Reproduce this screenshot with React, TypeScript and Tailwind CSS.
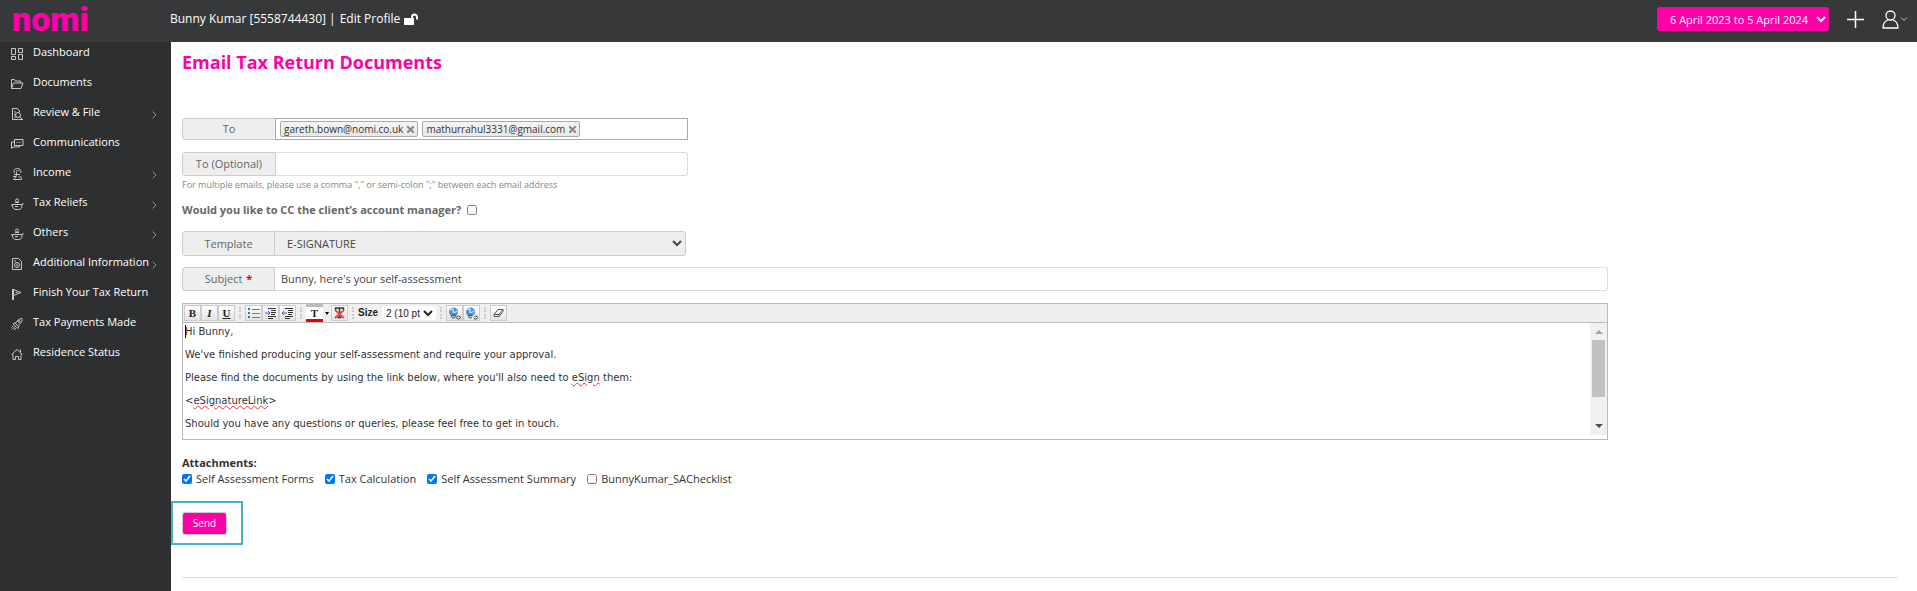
import { ReactNode, useState } from "react";

type NavItem = {
  title: string;
  icon: ReactNode;
  hasChildren?: boolean;
};

const potIcon = (
  <>
    <path d="M1.5 6.5h9.5v1.500c0 2-1.500 3.500-3.500 3.500h-2.500c-2 0-3.500-1.500-3.500-3.500z" />
    <path d="M1.500 7.500L0 6.500M11 7l1.500-2M4 8.500h3" />
    <circle cx="6" cy="2.500" r="1.500" />
    <path d="M4 4.500h4" />
  </>
);

const navItems: NavItem[] = [
  {
    title: "Dashboard",
    icon: <path d="M.5.5h4v6h-4zM.5 8.500h4v3h-4zM7.500.5h4v4h-4zM7.500 6.500h4v5h-4z" />,
  },
  {
    title: "Documents",
    icon: <path d="M.5 10.500v-9h3l1 1.500h5v2M.5 10.500l2-5.500h9.500l-2 5.500z" />,
  },
  {
    title: "Review & File",
    hasChildren: true,
    icon: (
      <>
        <path d="M8.500 4V3l-2-2.500h-5v11h6M3 4h2M3 6.500h1M3 9h2" />
        <circle cx="7" cy="7" r="2.500" />
        <path d="M9 9l3 3M7.500 11.500h4" />
      </>
    ),
  },
  {
    title: "Communications",
    icon: (
      <>
        <path d="M3.500 1.500h8.500v6H6l-2.500 0z" />
        <path d="M3.500 4h-3v6.500l1.500-1.500h6.500v-1.500M5.500 4.500h1M7.500 4.500h1M9.500 4.500h.5" />
      </>
    ),
  },
  {
    title: "Income",
    hasChildren: true,
    icon: (
      <>
        <path d="M3.500 5C2 2 4 .5 6.500.5s4.500 2 3 4.500" />
        <path d="M8.500 3c-2-1.500-3.500-.5-3 1.500v2M3 6.500h6M2 8.500h3M5.500 6.500c0 2-1 3.500-3 5h8v-1.500M7.500 9h3" />
      </>
    ),
  },
  { title: "Tax Reliefs", hasChildren: true, icon: potIcon },
  { title: "Others", hasChildren: true, icon: potIcon },
  {
    title: "Additional Information",
    hasChildren: true,
    icon: (
      <>
        <path d="M1.500.5h6l3 3v8h-9z" />
        <circle cx="6" cy="7" r="2.500" />
        <path d="M6 5.500v3M3 3h2" />
      </>
    ),
  },
  {
    title: "Finish Your Tax Return",
    icon: <path d="M2.500 12V1M1.500 1v11M2.500 1.500l7.500 3-7.500 3M4.500 4.500h2" />,
  },
  {
    title: "Tax Payments Made",
    icon: (
      <>
        <path d="M11 .5c-3 0-5 2-6.500 5l2 2c3-1.500 5-3.500 4.500-7z" />
        <path d="M4.500 4.500l-2.500 1.500 5 4.500 1-3M1 11.500l3-3M3 12l2-2M.5 9.500l1.500-1.500" />
        <circle cx="8" cy="3.500" r="1" />
      </>
    ),
  },
  {
    title: "Residence Status",
    icon: <path d="M.5 6.500l5.500-5 5.500 5M2 6v5.500h2.500v-3h3v3h2.500v-5.500M9.500 4v-2.500" />,
  },
];

const recipients = ["gareth.bown@nomi.co.uk", "mathurrahul3331@gmail.com"];

const attachments = [
  { title: "Self Assessment Forms", checked: true },
  { title: "Tax Calculation", checked: true },
  { title: "Self Assessment Summary", checked: true },
  { title: "BunnyKumar_SAChecklist", checked: false },
];

const labelStyle =
  "flex shrink-0 items-center justify-center rounded-l-[3px] border border-[#ccc] bg-[#eee] text-[#666]";

const Header = () => (
  <header className="flex h-[42px] items-center bg-[#37383a] text-[12px] text-white">
    <a
      href="#"
      className="w-[170px] pb-[5px] pl-3 font-['Roboto',sans-serif] text-[34px] leading-[30px] font-black text-[#ff00a8]"
    >
      nomi
    </a>
    <div className="flex items-center gap-1 pb-1">
      <span>Bunny Kumar [5558744430] |</span>
      <a href="#">Edit Profile</a>
      <svg width="15" height="12" viewBox="0 0 15 12" aria-hidden="true">
        <path d="M0 5h10v7H0z" fill="#fff" />
        <path d="M8 6V4a2.500 2.500 0 0 1 5 0v2.500" fill="none" stroke="#fff" strokeWidth="2" />
      </svg>
    </div>
    <div className="ml-auto flex items-center pr-[9px] pb-1">
      <select
        aria-label="Tax year"
        className="h-6 w-[172px] rounded-[3px] bg-[#ff00a8] pl-[9px] text-[11px]"
      >
        <option>6 April 2023 to 5 April 2024</option>
      </select>
      <button aria-label="Add" className="ml-[18px]">
        <svg width="17" height="17" viewBox="0 0 17 17" stroke="#fff" strokeWidth="1.500">
          <path d="M8.500 0v17M0 8.500h17" />
        </svg>
      </button>
      <button aria-label="Account" className="ml-[18px] flex items-center gap-px">
        <svg width="17" height="19" viewBox="0 0 17 19" fill="none" stroke="#fff" strokeWidth="1.300">
          <circle cx="8.500" cy="5.500" r="4.500" />
          <path d="M1 18c0-4 2-7 5-8M16 18c0-4-2-7-5-8M.5 18h16" />
        </svg>
        <svg width="8" height="5" viewBox="0 0 8 5" fill="none" stroke="#bbb">
          <path d="M1 .5l3 3 3-3" />
        </svg>
      </button>
    </div>
  </header>
);

const Sidebar = () => (
  <nav className="flex w-[171px] shrink-0 flex-col gap-[10px] bg-[#2e2f31] text-white">
    {navItems.map((item) => (
      <a key={item.title} href="#" className="flex h-5 items-center pr-[14px] pl-[11px] whitespace-nowrap">
        <svg
          width="13"
          height="13"
          viewBox="0 0 13 13"
          fill="none"
          stroke="#c8c8c8"
          className="mt-1 mr-[9px] shrink-0"
        >
          {item.icon}
        </svg>
        {item.title}
        {item.hasChildren && (
          <svg width="5" height="8" viewBox="0 0 5 8" fill="none" stroke="#888" className="mt-[5px] ml-auto shrink-0">
            <path d="M.5.5l3.500 3.500-3.500 3.500" />
          </svg>
        )}
      </a>
    ))}
  </nav>
);

const ToolButton = ({ label, children }: { label: string; children: ReactNode }) => (
  <button
    aria-label={label}
    className="flex h-4 w-[17px] items-center justify-center border border-[#ccc] bg-linear-to-b from-white to-[#e4e4e4] font-['Liberation_Serif',serif] text-[11px] leading-none font-bold text-[#222]"
  >
    {children}
  </button>
);

const Separator = () => <span className="mx-1 h-3 border-l-2 border-dotted border-[#ccc]" />;

const IndentIcon = ({ outdent }: { outdent?: boolean }) => (
  <svg width="12" height="11" viewBox="0 0 12 11" fill="none" stroke="#333">
    <path d="M3 .5h8M6 2.500h5M6 4.500h5M6 6.500h4M3 8.500h8M3 10.500h5" />
    <path d={outdent ? "M5 5H0M2 3L0 5l2 2" : "M0 5h5M3 3l2 2-2 2"} stroke="#3563e0" />
  </svg>
);

const GlobeIcon = ({ broken }: { broken?: boolean }) => (
  <svg width="13" height="13" viewBox="0 0 13 13" fill="none">
    <circle cx="5.500" cy="5" r="4.500" fill="#4d8fd6" />
    <path d="M2 3c2-2 4-1 3 1s2 2 4 0" stroke="#b9dcfa" strokeWidth="1.500" />
    <ellipse cx="5.500" cy="9.500" rx="2" ry="1.500" stroke="#444" />
    <ellipse cx="10.500" cy="10.500" rx="2" ry="1.500" stroke="#444" />
    {broken && <path d="M7 12l2-4" stroke="#fff" strokeWidth="1.500" />}
  </svg>
);

const Toolbar = () => (
  <div className="flex h-[19px] items-center border-b border-[#bbb] bg-[#efefef] px-px">
    <ToolButton label="Bold">B</ToolButton>
    <ToolButton label="Italic">
      <i>I</i>
    </ToolButton>
    <ToolButton label="Underline">
      <u>U</u>
    </ToolButton>
    <Separator />
    <ToolButton label="Bullet list">
      <svg width="12" height="11" viewBox="0 0 12 11">
        <path d="M0 0h2v2H0zM0 4h2v2H0zM0 8h2v2H0z" fill="#3563e0" />
        <path d="M4 1.500h8M4 5.500h8M4 9.500h8" stroke="#4a76e8" />
      </svg>
    </ToolButton>
    <ToolButton label="Indent">
      <IndentIcon />
    </ToolButton>
    <ToolButton label="Outdent">
      <IndentIcon outdent />
    </ToolButton>
    <Separator />
    <button
      aria-label="Text colour"
      className="h-[18px] w-[17px] border-t-3 border-b-3 border-t-[#bbb] border-b-red-600 bg-white font-['Liberation_Serif',serif] text-[11px] leading-3 font-bold text-[#222]"
    >
      T
    </button>
    <span className="mx-[2px] border-x-2 border-t-3 border-x-transparent border-t-black" />
    <ToolButton label="Clear formatting">
      <svg width="11" height="12" viewBox="0 0 11 12" fill="none">
        <path d="M1.500 3V1h8v2M5.500 1v9M3.500 10.500h4" stroke="#333" strokeWidth="1.500" />
        <path d="M1 3l9 8M10 3l-9 8" stroke="#e8474f" strokeWidth="2" />
      </svg>
    </ToolButton>
    <Separator />
    <label className="flex items-center gap-1 font-['Liberation_Sans',sans-serif] text-[10px] font-bold text-[#222]">
      Size
      <select className="h-[14px] w-[54px] rounded-[3px] bg-white text-[10px] leading-[13px] font-normal">
        <option>2 (10 pt)</option>
      </select>
    </label>
    <Separator />
    <ToolButton label="Insert link">
      <GlobeIcon />
    </ToolButton>
    <ToolButton label="Remove link">
      <GlobeIcon broken />
    </ToolButton>
    <Separator />
    <ToolButton label="Eraser">
      <svg width="11" height="9" viewBox="0 0 11 9" fill="#fff" stroke="#555">
        <path d="M1 5.500L5 .5h5l-4 5zM1 5.500v2h5v-2M6 7.500l4-5v-2" />
      </svg>
    </ToolButton>
  </div>
);

const Editor = () => (
  <div className="border border-[#bbb]">
    <Toolbar />
    <div className="flex justify-between pb-1">
      <div
        role="textbox"
        aria-label="Message"
        className="flex flex-col gap-[10px] px-[2px] pt-[2px] pb-[5px] font-['DejaVu_Sans',sans-serif] text-[10px] leading-[13px] text-[#333]"
      >
        <p className="flex">
          <span className="-mr-px border-l border-black" />
          Hi Bunny,
        </p>
        <p>We've finished producing your self-assessment and require your approval.</p>
        <p>
          Please find the documents by using the link below, where you'll also need to{" "}
          <span className="underline decoration-red-500 decoration-wavy decoration-1">eSign</span> them:
        </p>
        <p>
          &lt;
          <span className="underline decoration-red-500 decoration-wavy decoration-1">eSignatureLink</span>
          &gt;
        </p>
        <p>Should you have any questions or queries, please feel free to get in touch.</p>
      </div>
      <div className="flex w-[17px] flex-col items-center bg-[#f1f1f1] py-[7px]">
        <span className="border-x-4 border-b-4 border-x-transparent border-b-[#a3a3a3]" />
        <span className="mt-[6px] h-[57px] w-[13px] bg-[#c1c1c1]" />
        <span className="mt-auto border-x-4 border-t-4 border-x-transparent border-t-[#505050]" />
      </div>
    </div>
  </div>
);

const App = () => {
  const [ccManager, setCcManager] = useState(false);
  const [subject, setSubject] = useState("Bunny, here's your self-assessment");

  return (
    <div className="flex min-h-screen flex-col bg-white font-['Open_Sans',sans-serif] text-[11px] leading-4">
      <Header />
      <div className="flex flex-1">
        <Sidebar />
        <main className="flex-1 pr-[19px] pl-[11px]">
          <h1 className="mt-2 text-[18px] leading-6 font-bold text-[#ff00a8]">Email Tax Return Documents</h1>

          <div className="mt-11 flex h-[22px] w-[506px]">
            <span className={`${labelStyle} w-[94px]`}>To</span>
            <div className="-ml-px flex flex-1 items-center gap-1 border border-[#aaa] pl-1">
              {recipients.map((email) => (
                <span
                  key={email}
                  className="flex h-4 items-center gap-1 rounded-[2px] border border-[#aaa] bg-linear-to-b from-[#f4f4f4] to-[#e8e8e8] px-[3px] text-[10px] leading-3 text-[#333]"
                >
                  {email}
                  <button aria-label={`Remove ${email}`}>
                    <svg width="7" height="7" viewBox="0 0 7 7" stroke="#888" strokeWidth="2">
                      <path d="M0 0l7 7M7 0L0 7" />
                    </svg>
                  </button>
                </span>
              ))}
            </div>
          </div>

          <div className="mt-3 flex h-6 w-[506px]">
            <label htmlFor="optional" className={`${labelStyle} w-[94px]`}>
              To (Optional)
            </label>
            <input id="optional" className="min-w-0 flex-1 rounded-r-[3px] border border-l-0 border-[#ddd] px-1" />
          </div>
          <p className="mt-px text-[9px] leading-4 text-[#888]">
            For multiple emails, please use a comma "," or semi-colon ";" between each email address
          </p>

          <label className="mt-[9px] flex items-center gap-[6px] font-bold text-[#666]">
            Would you like to CC the client’s account manager?
            <input
              type="checkbox"
              checked={ccManager}
              onChange={(e) => setCcManager(e.target.checked)}
              className="h-[10px] w-[10px]"
            />
          </label>

          <div className="mt-[13px] flex h-[25px] w-[504px]">
            <label htmlFor="template" className={`${labelStyle} w-[93px]`}>
              Template
            </label>
            <select
              id="template"
              className="min-w-0 flex-1 rounded-r-[3px] border border-l-0 border-[#ccc] bg-[#eee] pl-2 text-[#444]"
            >
              <option>E-SIGNATURE</option>
            </select>
          </div>

          <div className="max-w-[1426px]">
            <div className="mt-[11px] flex h-6">
              <label htmlFor="subject" className={`${labelStyle} w-[93px] gap-1`}>
                Subject <span className="font-bold text-red-600">*</span>
              </label>
              <input
                id="subject"
                value={subject}
                onChange={(e) => setSubject(e.target.value)}
                className="min-w-0 flex-1 rounded-r-[3px] border border-l-0 border-[#ddd] px-[6px] text-[#444]"
              />
            </div>
            <div className="mt-3">
              <Editor />
            </div>
          </div>

          <h2 className="mt-[15px] font-bold text-[#333]">Attachments:</h2>
          <div className="flex items-center gap-[11px] text-[#333]">
            {attachments.map((item) => (
              <label key={item.title} className="flex items-center gap-1">
                <input type="checkbox" defaultChecked={item.checked} className="h-[10px] w-[10px]" />
                {item.title}
              </label>
            ))}
          </div>

          <div className="mt-[14px] -ml-[11px] flex h-11 w-[72px] items-center border-2 border-[#49add0] px-[9px]">
            <button className="h-[23px] w-[45px] rounded-[3px] border border-[#ccc] bg-[#ff00a8] text-[10px] text-white">
              Send
            </button>
          </div>
          <hr className="mt-8 border-[#d9d9d9]" />
        </main>
      </div>
    </div>
  );
};

export default App;
